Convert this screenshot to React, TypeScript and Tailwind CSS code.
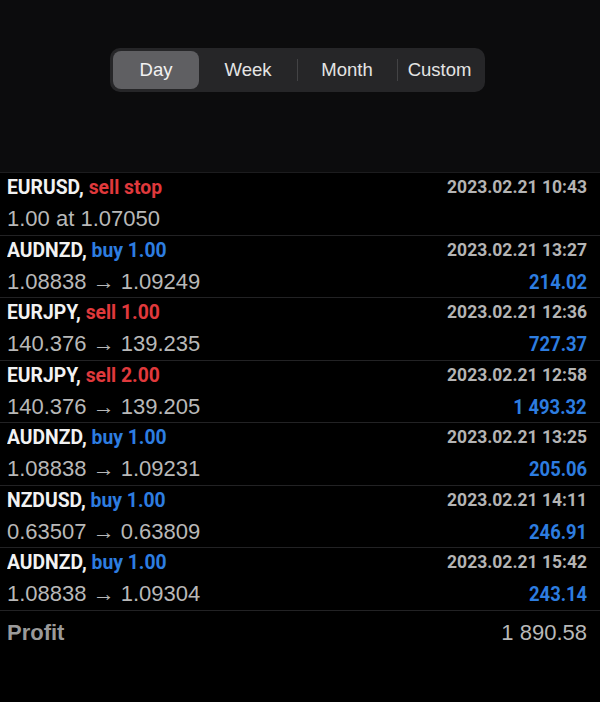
import React from "react";

type Deal = {
  symbol: string;
  side: string;
  tone: "sell" | "buy";
  detail: string;
  time: string;
  amount?: string;
};

const DEALS: Deal[] = [
  { symbol: "EURUSD", side: "sell stop", tone: "sell", detail: "1.00 at 1.07050", time: "2023.02.21 10:43" },
  { symbol: "AUDNZD", side: "buy 1.00", tone: "buy", detail: "1.08838 → 1.09249", time: "2023.02.21 13:27", amount: "214.02" },
  { symbol: "EURJPY", side: "sell 1.00", tone: "sell", detail: "140.376 → 139.235", time: "2023.02.21 12:36", amount: "727.37" },
  { symbol: "EURJPY", side: "sell 2.00", tone: "sell", detail: "140.376 → 139.205", time: "2023.02.21 12:58", amount: "1 493.32" },
  { symbol: "AUDNZD", side: "buy 1.00", tone: "buy", detail: "1.08838 → 1.09231", time: "2023.02.21 13:25", amount: "205.06" },
  { symbol: "NZDUSD", side: "buy 1.00", tone: "buy", detail: "0.63507 → 0.63809", time: "2023.02.21 14:11", amount: "246.91" },
  { symbol: "AUDNZD", side: "buy 1.00", tone: "buy", detail: "1.08838 → 1.09304", time: "2023.02.21 15:42", amount: "243.14" },
];

// widths taken from the picture: the segments are not all equal
const TABS = [
  { label: "Day", w: "w-[86px]" },
  { label: "Week", w: "w-[98px]" },
  { label: "Month", w: "w-[100px]" },
  { label: "Custom", w: "w-[85px]" },
];

function Segmented() {
  return (
    <div className="flex h-[44px] w-[375px] items-center rounded-[10px] bg-[#262628] p-[3px] font-['Liberation_Sans',Arial,sans-serif] text-[18.5px] text-[#e4e4e4]">
      {TABS.map((tab, i) => (
        <div key={tab.label} className={`relative flex h-full items-center justify-center ${tab.w}`}>
          {i >= 2 ? <div className="absolute left-0 top-[8px] h-[22px] w-px bg-[#434345]" /> : null}
          {i === 0 ? (
            <div className="flex h-full w-full items-center justify-center rounded-[8px] bg-[#5f5f62] text-[#f2f2f2]">
              {tab.label}
            </div>
          ) : (
            tab.label
          )}
        </div>
      ))}
    </div>
  );
}

function DealRow({ deal }: { deal: Deal }) {
  return (
    <div className="flex h-[62.5px] flex-col justify-center border-b border-[#222224] pl-[7px] pr-[13px] font-[Roboto,sans-serif]">
      <div className="flex items-center justify-between leading-none">
        <div className="inline-block origin-left scale-x-[0.92] whitespace-nowrap text-[21px] font-bold text-[#f2f2f2]">
          {deal.symbol},{" "}
          <span className={deal.tone === "sell" ? "text-[#e0393c]" : "text-[#2d7de0]"}>{deal.side}</span>
        </div>
        <div className="text-[17.5px] font-bold text-[#b4b4b4]">{deal.time}</div>
      </div>
      <div className="mt-[10px] flex items-center justify-between leading-none">
        <div className="font-['Liberation_Sans',Arial,sans-serif] text-[22px] text-[#b8b8b8]">{deal.detail}</div>
        {deal.amount ? (
          <div className="inline-block origin-right scale-x-[0.92] text-[20px] font-bold text-[#2d7de0]">{deal.amount}</div>
        ) : null}
      </div>
    </div>
  );
}

export default function App() {
  return (
    <div className="flex h-[702px] w-[600px] flex-col bg-black">
      <div className="flex h-[172px] justify-center bg-[#0c0c0d] pr-[5px] pt-[48px]">
        <Segmented />
      </div>
      <div className="border-t border-[#1c1c1e]">
        {DEALS.map((deal, i) => (
          <DealRow key={i} deal={deal} />
        ))}
      </div>
      <div className="flex h-[44px] items-center justify-between pl-[7px] pr-[13px] font-['Liberation_Sans',Arial,sans-serif] text-[22px] text-[#9a9a9a]">
        <span className="font-bold">Profit</span>
        <span className="text-[#b8b8b8]">1 890.58</span>
      </div>
    </div>
  );
}
